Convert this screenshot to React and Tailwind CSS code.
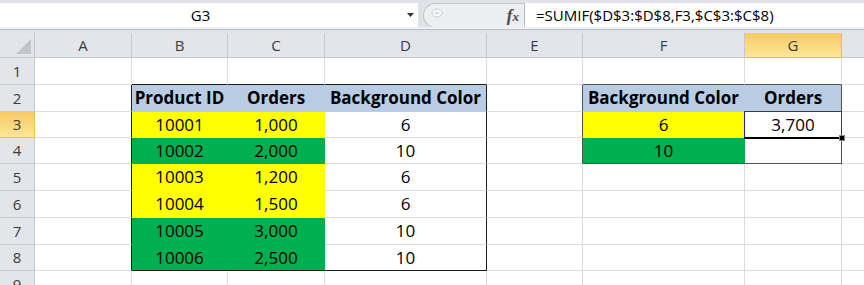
import React from "react";

const COLS = [
  { k: "A", w: "w-[97px]" },
  { k: "B", w: "w-[96px]" },
  { k: "C", w: "w-[97px]" },
  { k: "D", w: "w-[162px]" },
  { k: "E", w: "w-[96px]" },
  { k: "F", w: "w-[162px]" },
  { k: "G", w: "w-[97px]" },
  { k: "H", w: "w-[97px]" },
];

const ROW_H = ["h-[27px]", "h-[27px]", "h-[26px]", "h-[26px]", "h-[27px]", "h-[27px]", "h-[27px]", "h-[26px]", "h-[27px]"];

const BG = { y: "bg-[#ffff00]", g: "bg-[#00b050]", b: "bg-[#b8cce4]", n: "bg-white" };
const BR = {
  y: "border-r-[#ffff00]",
  g: "border-r-[#00b050]",
  b: "border-r-[#b8cce4]",
  n: "border-r-[#dadcdd]",
  black: "border-r-[#1c1c1c]",
  gray: "border-r-[#505050]",
};
const BB = {
  y: "border-b-[#ffff00]",
  g: "border-b-[#00b050]",
  b: "border-b-[#b8cce4]",
  n: "border-b-[#dadcdd]",
  black: "border-b-[#1c1c1c]",
  gray: "border-b-[#505050]",
};

const PRODUCTS = [
  ["10001", "1,000", "6", "y"],
  ["10002", "2,000", "10", "g"],
  ["10003", "1,200", "6", "y"],
  ["10004", "1,500", "6", "y"],
  ["10005", "3,000", "10", "g"],
  ["10006", "2,500", "10", "g"],
];

function getCell(r, c) {
  if (r === 2) {
    const heads = { B: "Product ID", C: "Orders", D: "Background Color", F: "Background Color", G: "Orders" };
    if (heads[c]) return { text: heads[c], bold: true, fill: "b" };
  }
  if (r >= 3 && r <= 8) {
    const [id, orders, color, fill] = PRODUCTS[r - 3];
    if (c === "B") return { text: id, fill };
    if (c === "C") return { text: orders, fill };
    if (c === "D") return { text: color, fill: "n" };
  }
  if (r === 3 && c === "F") return { text: "6", fill: "y" };
  if (r === 3 && c === "G") return { text: "3,700", fill: "n" };
  if (r === 4 && c === "F") return { text: "10", fill: "g" };
  return { text: "", fill: "n" };
}

function rightBorder(r, c, fill) {
  if ((c === "A" || c === "D") && r >= 2 && r <= 8) return "black";
  if ((c === "E" || c === "G") && r >= 2 && r <= 4) return "gray";
  return fill;
}

function bottomBorder(r, c, fill) {
  if ((r === 1 || r === 8) && ["B", "C", "D"].includes(c)) return "black";
  if ((r === 1 || r === 4) && ["F", "G"].includes(c)) return "gray";
  return fill;
}

const FormulaBar = () => (
  <div className="h-[33px] bg-[#dfe3e8] flex flex-col shrink-0">
    <div className="h-[3px]" />
    <div className="h-[24px] flex">
      {/* Name box */}
      <div className="w-[418px] bg-white flex items-center">
        <div className="w-[401px] text-center text-[15px] text-black">G3</div>
        <svg width="17" height="6" viewBox="0 0 17 6">
          <polygon points="6,1 13,1 9.5,5" fill="#333" />
        </svg>
      </div>
      <div className="w-[5px]" />
      {/* Buttons + fx */}
      <div className="w-[101px] h-[25px] bg-[#eceef1] border border-r-0 border-[#c0c6ce] rounded-l-[13px] flex items-center justify-between">
        <svg width="18" height="14" viewBox="0 0 18 14" className="ml-[4px] mb-[5px]">
          <ellipse cx="9" cy="7" rx="5" ry="4" fill="#f6f7f9" stroke="#c9ced5" />
          <line x1="7" y1="7" x2="11" y2="7" stroke="#b4bac2" />
        </svg>
        <span className="pr-[5px] font-['Liberation_Serif',serif] italic font-bold text-[17px] text-[#4a4a4a] leading-none">
          f<span className="text-[13px]">x</span>
        </span>
      </div>
      <div className="w-px bg-[#b7bdc5]" />
      {/* Formula */}
      <div className="flex-1 bg-white flex items-center pl-[11px] text-[15px] text-black whitespace-nowrap">
        =SUMIF($D$3:$D$8,F3,$C$3:$C$8)
      </div>
    </div>
    <div className="h-[2px] bg-[#eef0f3]" />
    <div className="h-px bg-[#b9bec6]" />
    <div className="h-[3px]" />
  </div>
);

const ColumnHeaders = () => (
  <div className="flex h-[25px] shrink-0">
    <div className="w-[35px] shrink-0 bg-[#e2e6eb] border-r border-b border-[#c3c9d1] relative">
      <svg width="35" height="24" viewBox="0 0 35 24" className="absolute left-0 top-0">
        <polygon points="31,6 31,21 16,21" fill="#c1c5cb" />
      </svg>
    </div>
    {COLS.map((col) =>
      col.k === "G" ? (
        <div
          key={col.k}
          className={`${col.w} shrink-0 bg-linear-to-b from-[#f6c965] to-[#fde796] border-r border-b border-[#efbb52] flex items-center justify-center text-[15px] text-[#3b3b3b]`}
        >
          {col.k}
        </div>
      ) : (
        <div
          key={col.k}
          className={`${col.w} shrink-0 bg-[#e2e6eb] border-r border-b border-[#c3c9d1] flex items-center justify-center text-[15px] text-[#3b3b3b]`}
        >
          {col.k === "H" ? "" : col.k}
        </div>
      )
    )}
  </div>
);

const Row = ({ r }) => (
  <div className={`flex shrink-0 ${ROW_H[r - 1]}`}>
    {r === 3 ? (
      <div className="w-[35px] shrink-0 bg-linear-to-b from-[#f6c965] to-[#fde796] border-r border-b border-[#efbb52] flex items-center justify-center text-[15px] text-[#3b3b3b]">
        {r}
      </div>
    ) : (
      <div className="w-[35px] shrink-0 bg-[#e2e6eb] border-r border-b border-[#c3c9d1] flex items-center justify-center text-[15px] text-[#3b3b3b]">
        {r}
      </div>
    )}
    {COLS.map((col) => {
      const cell = getCell(r, col.k);
      const selected = r === 3 && col.k === "G";
      return (
        <div
          key={col.k}
          className={`${col.w} shrink-0 border-r border-b ${BG[cell.fill]} ${BR[rightBorder(r, col.k, cell.fill)]} ${BB[bottomBorder(r, col.k, cell.fill)]} flex items-center justify-center text-[17px] text-black whitespace-nowrap ${cell.bold ? "font-bold" : ""} ${selected ? "relative" : ""}`}
        >
          {cell.text}
          {selected && (
            <div className="absolute -left-px -top-px -right-px -bottom-[2px] z-10 border-t border-r border-[#3c3c3c] border-l border-l-[#2323d6] border-b-2 border-b-black">
              <div className="absolute -right-[4px] -bottom-[4px] w-[6px] h-[6px] bg-black border border-[#888]" />
            </div>
          )}
        </div>
      );
    })}
  </div>
);

export default function App() {
  return (
    <div className="w-[864px] h-[285px] overflow-hidden bg-white flex flex-col font-['Open_Sans',sans-serif]">
      <FormulaBar />
      <ColumnHeaders />
      {[1, 2, 3, 4, 5, 6, 7, 8, 9].map((r) => (
        <Row key={r} r={r} />
      ))}
    </div>
  );
}
